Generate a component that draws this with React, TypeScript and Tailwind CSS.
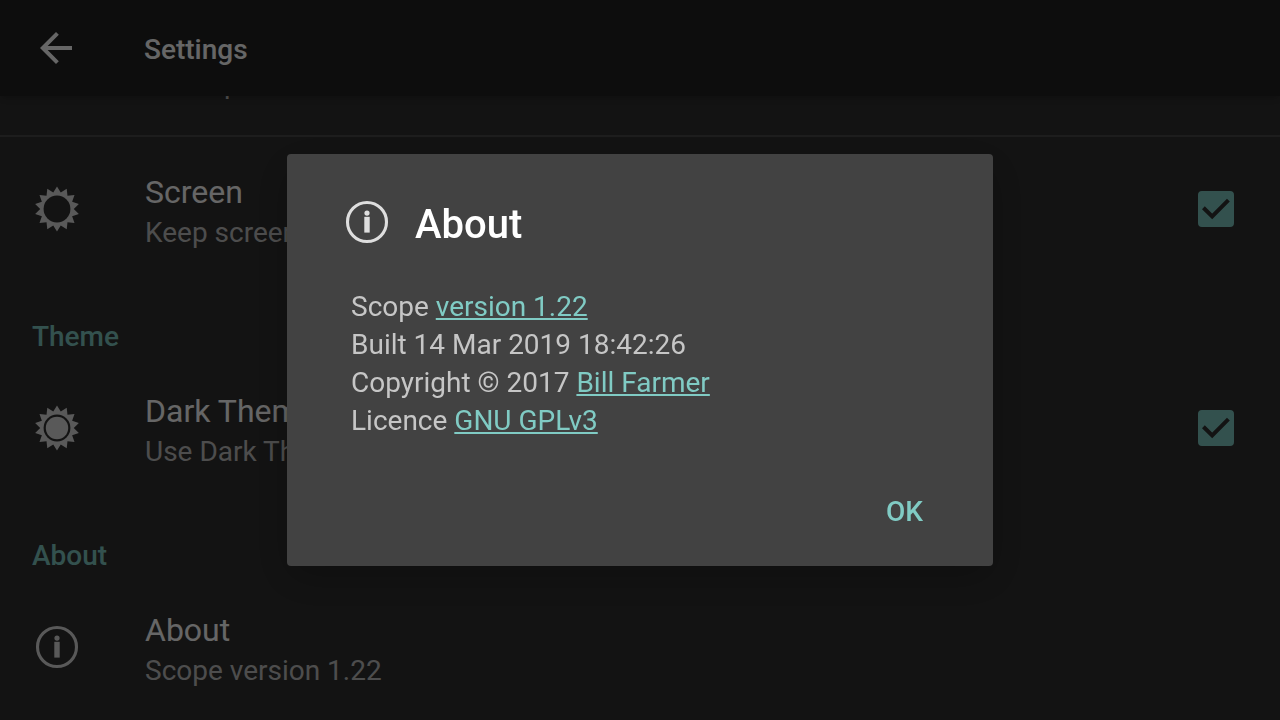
import type { ReactNode } from "react";

function sunPoints(count: number, outer: number, inner: number) {
  const pts: string[] = [];
  for (let i = 0; i < count * 2; i++) {
    const r = i % 2 === 0 ? outer : inner;
    const a = (Math.PI * i) / count;
    pts.push(`${(24 + r * Math.sin(a)).toFixed(2)},${(24 - r * Math.cos(a)).toFixed(2)}`);
  }
  return pts.join(" ");
}

const SUN = sunPoints(14, 22.4, 16.8);

function SunIcon({ filled = false }: { filled?: boolean }) {
  const id = filled ? "sun-filled" : "sun-open";
  return (
    <svg viewBox="0 0 48 48" className="size-12" aria-hidden="true">
      <mask id={id}>
        <rect width="48" height="48" fill="white" />
        <circle cx="24" cy="24" r="13.4" fill="black" />
        {filled && <circle cx="24" cy="24" r="11.2" fill="white" />}
      </mask>
      <polygon points={SUN} fill="currentColor" mask={`url(#${id})`} />
    </svg>
  );
}

function InfoIcon() {
  return (
    <svg viewBox="0 0 48 48" className="size-12" aria-hidden="true">
      <circle cx="24" cy="24" r="19.5" fill="none" stroke="currentColor" strokeWidth="3.1" />
      <circle cx="24" cy="15.1" r="2.6" fill="currentColor" />
      <rect x="21.3" y="18.8" width="5.4" height="15.8" fill="currentColor" />
    </svg>
  );
}

function Category({ children }: { children: ReactNode }) {
  return (
    <h2 className="flex h-[74px] shrink-0 items-center px-8 pt-9 text-[28px] leading-8 font-medium text-[#80cbc4]">
      {children}
    </h2>
  );
}

type RowProps = { icon?: ReactNode; title: string; summary: string; id?: string };

function Row({ icon, title, summary, id }: RowProps) {
  const Text = id ? "label" : "div";
  return (
    <div className="flex h-[145px] shrink-0 items-center pr-[46px] pb-0.5 pl-[33px]">
      <div className="w-28 shrink-0 text-[#dedede]">{icon}</div>
      <Text htmlFor={id} className="flex min-w-0 flex-1 flex-col pt-2">
        <span className="text-[32px] leading-10 text-white">{title}</span>
        <span className="text-[28px] leading-[42px] text-[#c1c1c1]">{summary}</span>
      </Text>
      {id && (
        <span className="relative size-9 shrink-0">
          <input
            id={id}
            type="checkbox"
            defaultChecked
            className="peer block size-9 appearance-none rounded border-4 border-[#80cbc4] checked:bg-[#80cbc4]"
          />
          <svg
            viewBox="0 0 36 36"
            className="pointer-events-none absolute inset-0 hidden size-9 text-[#303030] peer-checked:block"
            aria-hidden="true"
          >
            <path d="M5.4 16.8l8.8 8.6L30.4 9.2" fill="none" stroke="currentColor" strokeWidth="4" />
          </svg>
        </span>
      )}
    </div>
  );
}

const linkClass = "text-[#80cbc4] underline decoration-2 underline-offset-2";

export default function App() {
  return (
    <div className="flex h-screen flex-col overflow-hidden bg-[#303030] font-[Roboto,sans-serif]">
      <header className="z-10 flex h-24 shrink-0 items-center gap-16 bg-[#212121] px-8 text-white shadow-md">
        <button type="button" aria-label="Back" className="size-12">
          <svg viewBox="0 0 24 24" className="size-12" aria-hidden="true">
            <path d="M20 11H7.83l5.59-5.59L12 4l-8 8 8 8 1.41-1.41L7.83 13H20v-2z" fill="currentColor" />
          </svg>
        </button>
        <h1 className="pt-1 text-[28px] leading-8 font-medium">Settings</h1>
      </header>

      <main className="flex min-h-0 flex-1 flex-col justify-end overflow-hidden">
        <p className="shrink-0 px-[145px] pb-[30px] text-[28px] leading-[42px] text-[#c1c1c1]">Audio port</p>
        <hr className="h-0.5 shrink-0 border-0 bg-[#4a4a4a]" />
        <Row id="screen" icon={<SunIcon />} title="Screen" summary="Keep screen on" />
        <Category>Theme</Category>
        <Row id="dark" icon={<SunIcon filled />} title="Dark Theme" summary="Use Dark Theme" />
        <Category>About</Category>
        <Row icon={<InfoIcon />} title="About" summary="Scope version 1.22" />
      </main>

      <div className="fixed inset-0 z-20 flex items-center justify-center bg-black/60">
        <section
          role="dialog"
          aria-modal="true"
          aria-labelledby="about-title"
          className="w-[706px] max-w-full rounded bg-[#424242] shadow-[0_12px_40px_rgba(0,0,0,0.25)]"
        >
          <div className="flex items-start gap-6 px-14 pt-11 text-[#dedede]">
            <InfoIcon />
            <h2 id="about-title" className="pt-[3px] text-[40px] leading-[48px] font-medium text-white">
              About
            </h2>
          </div>
          <p className="px-16 pt-[39px] text-[28px] leading-[38px] text-[#c6c6c6]">
            Scope <a href="#version" className={linkClass}>version 1.22</a>
            <br />
            Built 14 Mar 2019 18:42:26
            <br />
            Copyright © 2017 <a href="#author" className={linkClass}>Bill Farmer</a>
            <br />
            Licence <a href="#licence" className={linkClass}>GNU GPLv3</a>
          </p>
          <div className="flex justify-end px-[50px] pt-9 pb-[18px]">
            <button type="button" className="h-[72px] px-5 text-[28px] font-medium text-[#80cbc4]">
              OK
            </button>
          </div>
        </section>
      </div>
    </div>
  );
}
